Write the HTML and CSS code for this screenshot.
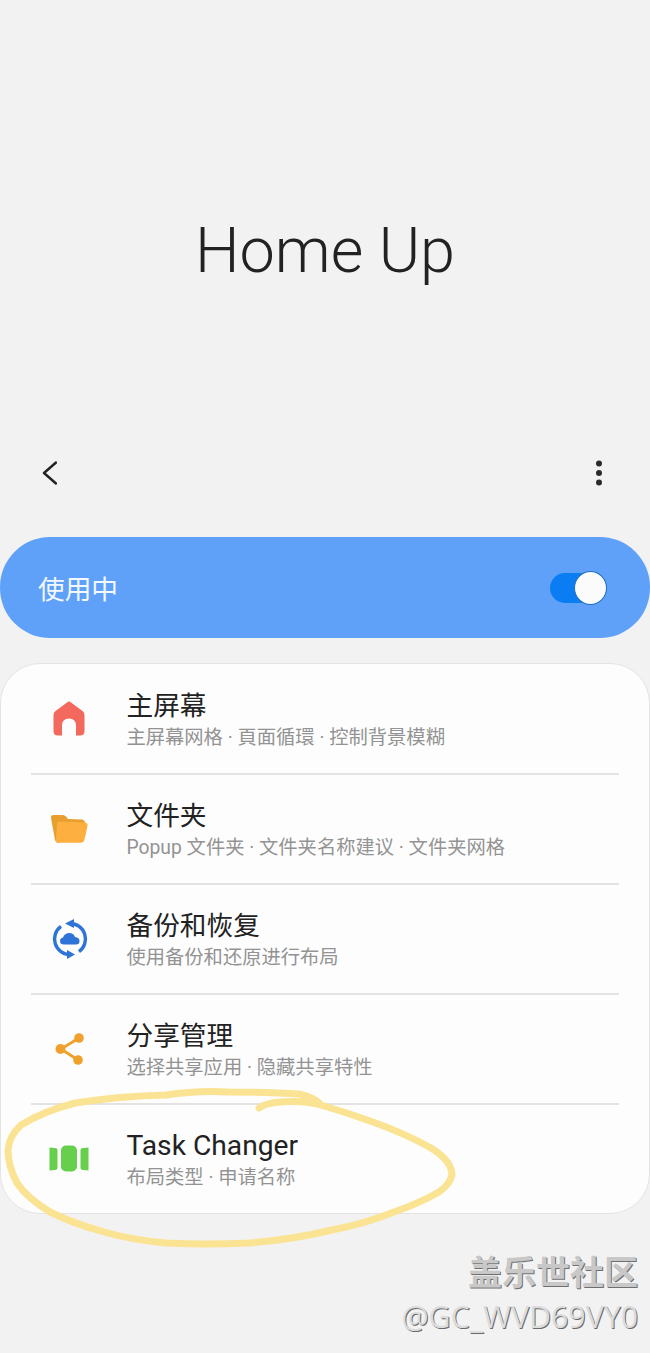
FILE: index.html
```html
<!DOCTYPE html>
<html lang="zh">
<head>
    <meta charset="UTF-8">
    <meta name="viewport" content="width=device-width, initial-scale=1.0">
    <title>Home Up</title>
    <link rel="stylesheet" href="styles.css">
</head>
<body>
    <div class="container">
        <!-- 标题 -->
        <div class="hero">
            <h1 class="hero-title">Home Up</h1>
        </div>

        <!-- 工具栏 -->
        <div class="toolbar">
            <svg class="back-icon" width="15" height="24" viewBox="0 0 15 24">
                <path d="M14 1.5 L2 12 L14 22.5" fill="none" stroke="#222" stroke-width="2.4" stroke-linecap="round" stroke-linejoin="round"/>
            </svg>
            <svg class="more-icon" width="8" height="26" viewBox="0 0 8 26">
                <circle cx="4" cy="3.5" r="3"/>
                <circle cx="4" cy="13" r="3"/>
                <circle cx="4" cy="22.5" r="3"/>
            </svg>
        </div>

        <!-- 开关 -->
        <div class="master-switch">
            <span class="master-label">使用中</span>
            <div class="toggle"><div class="toggle-thumb"></div></div>
        </div>

        <!-- 设置列表 -->
        <div class="settings-card">
            <div class="row">
                <div class="row-icon">
                    <svg width="40" height="40" viewBox="0 0 40 40">
                        <path fill-rule="evenodd" fill="#f4695e" d="M20 2.5 Q21 2.5 22 3.4 L33.5 12 Q35.5 13.6 35.5 16 L35.5 32 Q35.5 36.5 31 36.5 L27 36.5 L27 27 Q27 19.5 20 19.5 Q13 19.5 13 27 L13 36.5 L9 36.5 Q4.5 36.5 4.5 32 L4.5 16 Q4.5 13.6 6.5 12 L18 3.4 Q19 2.5 20 2.5 Z"/>
                    </svg>
                </div>
                <div class="row-text">
                    <div class="row-title">主屏幕</div>
                    <div class="row-sub">主屏幕网格 · 頁面循環 · 控制背景模糊</div>
                </div>
            </div>
            <div class="row">
                <div class="row-icon">
                    <svg width="40" height="40" viewBox="0 0 40 40">
                        <path fill="#e89f30" d="M4.5 6 L14 6 Q15.5 6 17 7.5 L19 10 L33 10.5 Q36 11 36 14 L36 20 L9 34 Q6.5 33.5 6 31 L2 9 Q1.7 6 4.5 6 Z"/>
                        <path fill="#fdb03f" d="M11 12.5 L35.5 13.5 Q39 13.8 38.5 17 L35.5 30.5 Q34.8 33.8 31.5 33.8 L9.5 33.8 Q6.8 33.8 7 31 L8 15 Q8.2 12.5 11 12.5 Z"/>
                    </svg>
                </div>
                <div class="row-text">
                    <div class="row-title">文件夹</div>
                    <div class="row-sub">Popup 文件夹 · 文件夹名称建议 · 文件夹网格</div>
                </div>
            </div>
            <div class="row">
                <div class="row-icon">
                    <svg width="40" height="40" viewBox="0 0 40 40">
                        <path fill="none" stroke="#2d73d8" stroke-width="3.4" d="M21 4.5 A15.5 15.5 0 0 1 30 32.6 M21 35.5 A15.5 15.5 0 0 1 12 7.4"/>
                        <path fill="#2d73d8" d="M16 4.5 L25 0 L25 9 Z M26 35.5 L18 31 L18 40 Z"/>
                        <path fill="#2d73d8" d="M15 25.5 Q11 25.5 11 22 Q11 19 14 18.5 Q15.5 14 20.5 14 Q24.5 14 26 18 Q30.5 18.5 30.5 22 Q30.5 25.5 27 25.5 Z"/>
                    </svg>
                </div>
                <div class="row-text">
                    <div class="row-title">备份和恢复</div>
                    <div class="row-sub">使用备份和还原进行布局</div>
                </div>
            </div>
            <div class="row">
                <div class="row-icon">
                    <svg width="40" height="40" viewBox="0 0 40 40">
                        <path fill="none" stroke="#f0a02c" stroke-width="2.8" d="M30 9 L12 20 L29 31"/>
                        <circle cx="30" cy="9" r="4.8" fill="#f0a02c"/>
                        <circle cx="11.5" cy="20" r="5" fill="#f0a02c"/>
                        <circle cx="29" cy="31" r="4.8" fill="#f0a02c"/>
                    </svg>
                </div>
                <div class="row-text">
                    <div class="row-title">分享管理</div>
                    <div class="row-sub">选择共享应用 · 隐藏共享特性</div>
                </div>
            </div>
            <div class="row">
                <div class="row-icon">
                    <svg width="40" height="40" viewBox="0 0 40 40">
                        <path fill="#66cf4c" d="M0.5 8.5 L6 9 Q8.5 9.2 8.5 11 L8.5 29 Q8.5 30.8 6 31 L0.5 31.5 Z"/>
                        <rect x="12" y="6.5" width="16" height="26" rx="5" fill="#66cf4c"/>
                        <path fill="#66cf4c" d="M39.5 8.5 L34 9 Q31.5 9.2 31.5 11 L31.5 29 Q31.5 30.8 34 31 L39.5 31.5 Z"/>
                    </svg>
                </div>
                <div class="row-text">
                    <div class="row-title row-title-latin">Task Changer</div>
                    <div class="row-sub">布局类型 · 申请名称</div>
                </div>
            </div>
        </div>

        <!-- 水印 -->
        <div class="watermark">
            <div class="watermark-name">盖乐世社区</div>
            <div class="watermark-user">@GC_WVD69VY0</div>
        </div>
    </div>

    <!-- 手绘圈注 -->
    <svg class="scribble" width="650" height="1353" viewBox="0 0 650 1353">
        <path d="M259 1108 Q266 1103 280 1102 Q303 1100 321 1105 Q348 1113 373 1122 Q406 1134 431 1148 Q452 1161 452 1175 Q450 1184 439 1192 Q420 1203 394 1212 Q364 1224 332 1230 Q290 1240 249 1243 Q205 1245 166 1243 Q132 1240 104 1232 Q72 1223 50 1212 Q27 1198 17 1183 Q8 1166 8 1150 Q9 1136 21 1125 Q44 1111 75 1103 Q120 1096 166 1095 Q198 1090 228 1092 Q270 1092 299 1094 Q314 1097 321 1105"/>
    </svg>
</body>
</html>
```

FILE: styles.css
```css
* {
    margin: 0;
    padding: 0;
    box-sizing: border-box;
}

body {
    position: relative;
    height: 1353px;
    background: #f2f2f2;
    font-family: "Roboto", "Noto Sans CJK SC", sans-serif;
    overflow: hidden;
}

.container {
    display: flex;
    flex-direction: column;
}

/* 标题 */
.hero {
    height: 437px;
    padding-top: 63px;
    display: flex;
    align-items: center;
    justify-content: center;
}

.hero-title {
    font-size: 63px;
    font-weight: 300;
    color: #222;
}

/* 工具栏 */
.toolbar {
    height: 72px;
    padding: 0 47px 0 42px;
    display: flex;
    align-items: center;
    justify-content: space-between;
}

.more-icon {
    fill: #2b2b2b;
}

/* 开关 */
.master-switch {
    height: 101px;
    margin-top: 28px;
    padding: 0 43px 0 38px;
    display: flex;
    align-items: center;
    justify-content: space-between;
    border-radius: 50px;
    background: #5fa1f8;
}

.master-label {
    font-size: 26.7px;
    color: #f4f8ff;
}

.toggle {
    position: relative;
    width: 57px;
    height: 30px;
    border-radius: 15px;
    background: #0a7df3;
}

.toggle-thumb {
    position: absolute;
    top: -2px;
    right: 0;
    width: 33px;
    height: 34px;
    border-radius: 50%;
    background: #fbfbfb;
    border: 1px solid #1b6fc4;
}

/* 设置列表 */
.settings-card {
    height: 551px;
    margin-top: 25px;
    border: 1px solid #e4e4e4;
    border-radius: 40px;
    background: #fdfdfd;
}

.row {
    position: relative;
    height: 110px;
    display: flex;
    align-items: center;
    padding-left: 48px;
}

.row + .row::before {
    content: "";
    position: absolute;
    top: -1px;
    left: 30px;
    right: 30px;
    height: 2px;
    background: #e3e3e3;
}

.row-icon {
    width: 40px;
    height: 40px;
    margin-right: 37.5px;
}

.row-text {
    display: flex;
    flex-direction: column;
    gap: 2px;
    padding-top: 2px;
}

.row-title {
    font-size: 26.7px;
    line-height: 34px;
    color: #222;
}

.row-title-latin {
    font-size: 28.2px;
}

.row-sub {
    font-size: 19.3px;
    line-height: 26px;
    color: #939393;
}

/* 水印 */
.watermark {
    margin-top: 37px;
    padding-right: 12px;
    text-align: right;
}

.watermark-name {
    font-size: 34px;
    line-height: 44px;
    font-weight: 700;
    color: #c8c8c8;
    text-shadow: 1px 1px 0 #6f6f6f;
}

.watermark-user {
    font-family: "Open Sans", "Noto Sans", sans-serif;
    font-size: 30.3px;
    line-height: 44px;
    color: #dcdcdc;
    text-shadow: 1px 1px 0 #6a6a6a;
}

/* 手绘圈注 */
.scribble {
    position: absolute;
    top: 0;
    left: 0;
    pointer-events: none;
}

.scribble path {
    fill: none;
    stroke: #fbe394;
    stroke-width: 7;
    stroke-linecap: round;
    stroke-linejoin: round;
}
```
